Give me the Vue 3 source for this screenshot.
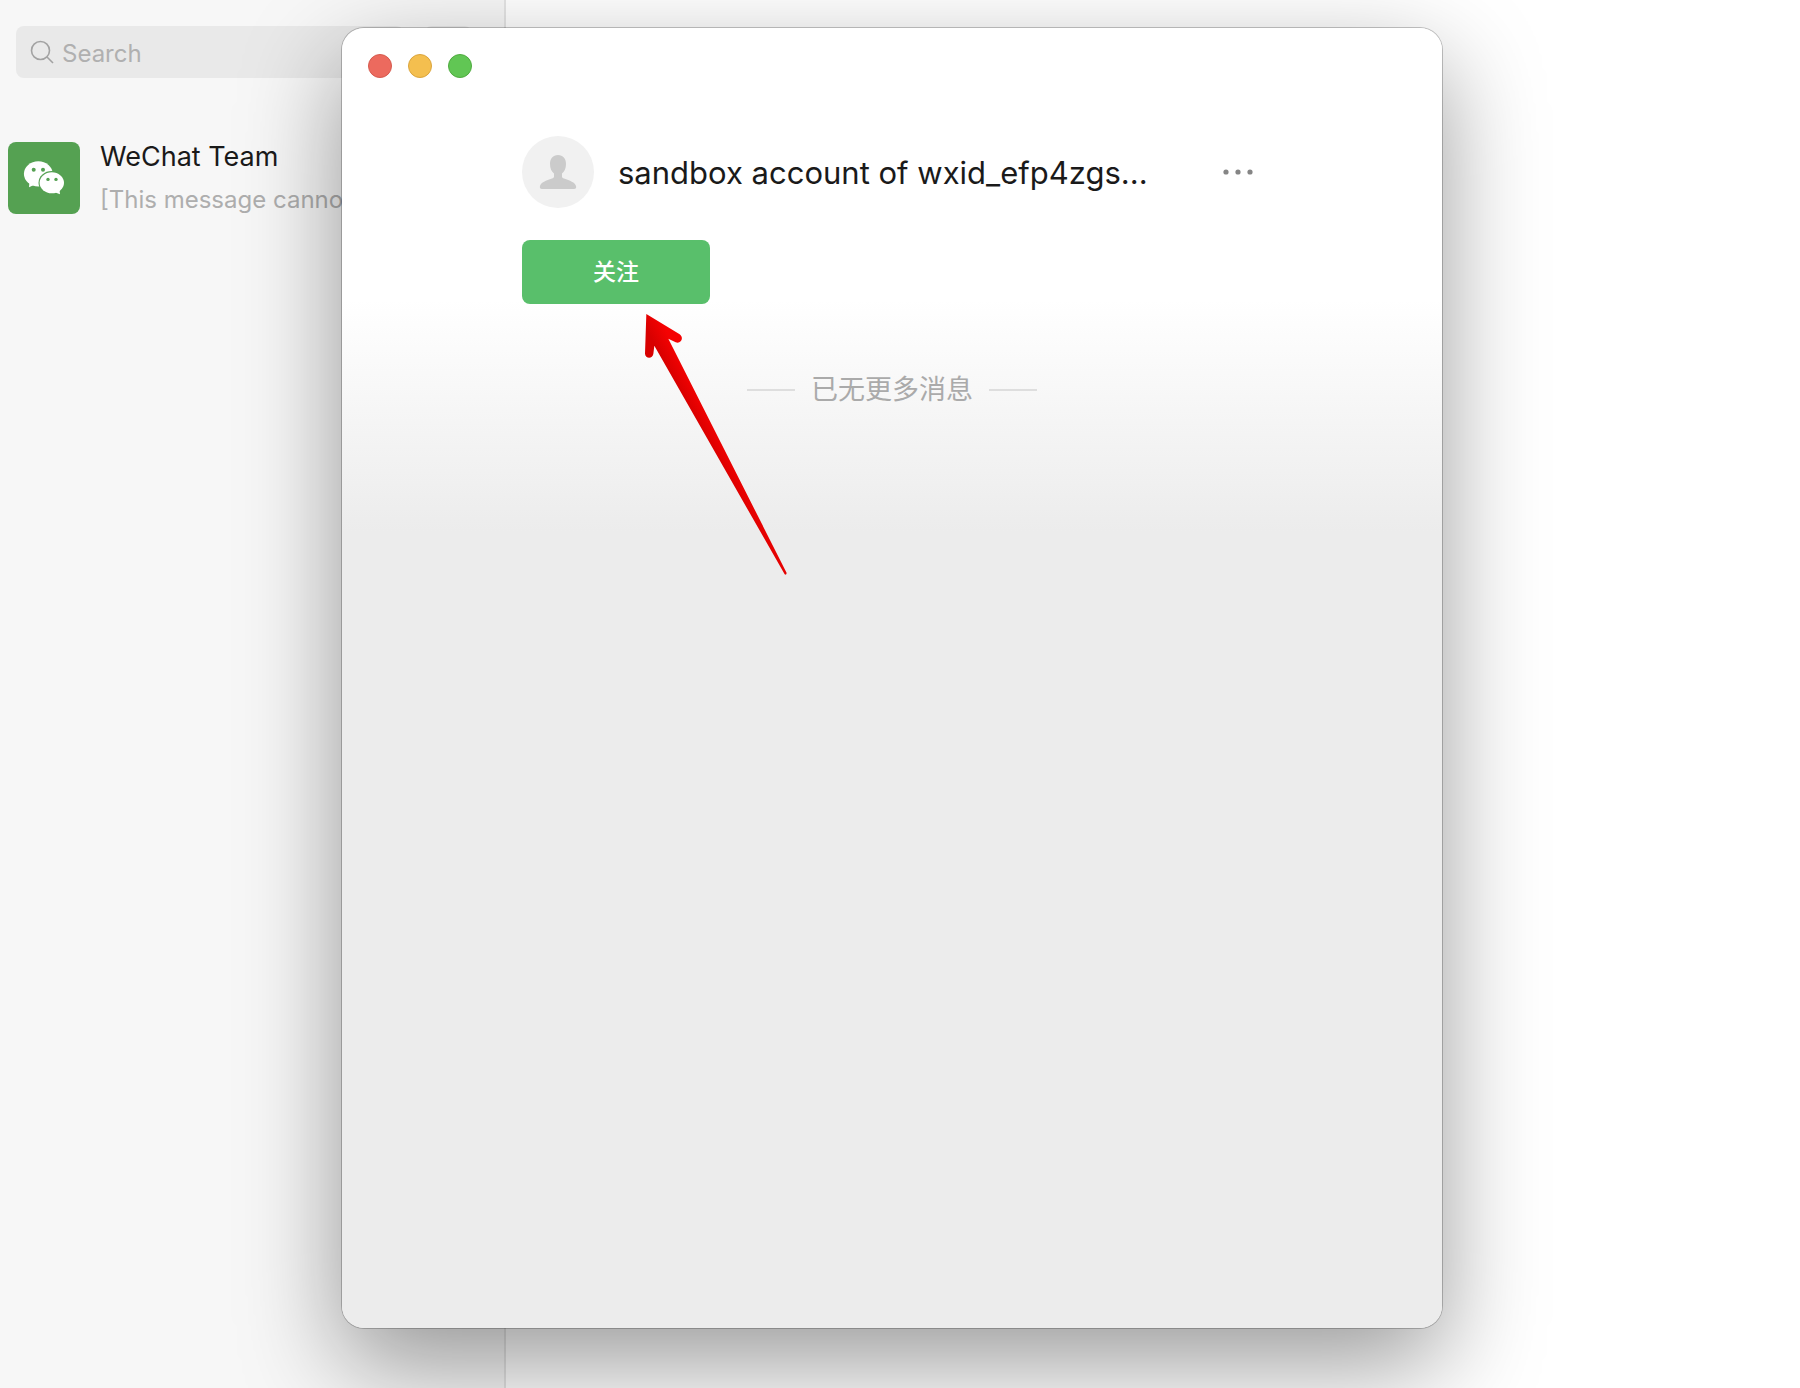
<template>
  <div class="desktop">
    <aside class="sidebar">
      <div class="toolbar">
        <label class="search">
          <svg class="search-icon" viewBox="0 0 24 24" aria-hidden="true">
            <circle cx="10.5" cy="10.5" r="9" />
            <path d="M17 17l6 6" />
          </svg>
          <input v-model="keyword" type="text" placeholder="Search" aria-label="Search" />
        </label>
        <button class="add" type="button" aria-label="Add"></button>
      </div>

      <ul class="chats">
        <li v-for="chat in chats" :key="chat.name" class="chat">
          <svg class="chat-logo" viewBox="0 0 72 72" aria-hidden="true">
            <g fill="#fff">
              <ellipse cx="30.3" cy="31.8" rx="14.4" ry="12.6" />
              <path d="M21.5 39.5L21 45.2l6.5-3z" />
            </g>
            <ellipse cx="43.7" cy="40.7" rx="13.2" ry="11.7" fill="#55a152" />
            <g fill="#fff">
              <ellipse cx="43.8" cy="40.8" rx="12.2" ry="10.5" />
              <path d="M46 50l6 2.2L51.4 46z" />
            </g>
            <g fill="#55a152">
              <circle cx="25.7" cy="27.7" r="2" />
              <circle cx="35" cy="27.7" r="2" />
              <circle cx="40" cy="37.4" r="1.7" />
              <circle cx="48" cy="37.4" r="1.7" />
            </g>
          </svg>
          <div class="chat-text">
            <div class="chat-name">{{ chat.name }}</div>
            <div class="chat-preview">{{ chat.preview }}</div>
          </div>
        </li>
      </ul>
    </aside>

    <main class="conversation"></main>

    <section class="window">
      <header class="titlebar">
        <button class="light red" type="button" aria-label="Close"></button>
        <button class="light yellow" type="button" aria-label="Minimize"></button>
        <button class="light green" type="button" aria-label="Zoom"></button>
      </header>

      <div class="profile">
        <div class="account">
          <svg class="avatar" viewBox="0 0 72 72" aria-hidden="true">
            <circle cx="36" cy="36" r="36" fill="#f1f1f1" />
            <path
              fill="#cbcbcb"
              d="M36 19c5 0 8 3.5 8 9 0 4.5-1.5 7.5-4 9.5v3c0 1 .8 1.7 2 2.1 6 2 11 3.9 12 7.4.5 2-.2 3-2 3H20c-1.8 0-2.500-1-2-3 1-3.5 6-5.4 12-7.4 1.2-.4 2-1.1 2-2.1v-3c-2.500-2-4-5-4-9.5 0-5.500 3-9 8-9z"
            />
          </svg>
          <h1>sandbox account of wxid_efp4zgs...</h1>
          <button class="more" type="button" aria-label="More">
            <svg viewBox="0 0 32 8" aria-hidden="true">
              <circle cx="4" cy="4" r="2.6" />
              <circle cx="16" cy="4" r="2.6" />
              <circle cx="28" cy="4" r="2.6" />
            </svg>
          </button>
        </div>
        <button class="follow" type="button">关注</button>
      </div>

      <div class="feed">
        <p class="no-more">已无更多消息</p>
      </div>
    </section>

    <svg class="pointer" viewBox="0 0 510 870" aria-hidden="true">
      <defs>
        <linearGradient id="arrow" gradientUnits="userSpaceOnUse" x1="245" y1="455" x2="290" y2="431">
          <stop offset="0" stop-color="#d80000" />
          <stop offset="1" stop-color="#f50202" />
        </linearGradient>
      </defs>
      <path
        d="M49 42L149 103c14 10 4 30-12 24l-22-11L470 819q-1 7-6 4L73 137l-3 25c-2 15-24 15-25-1z"
        fill="url(#arrow)"
      />
    </svg>
  </div>
</template>

<script setup>
import { ref } from 'vue'

const keyword = ref('')

const chats = ref([{ name: 'WeChat Team', preview: '[This message cannot' }])
</script>

<style>
body {
  margin: 0;
}
</style>

<style scoped>
.desktop {
  position: relative;
  display: flex;
  min-height: 100vh;
  overflow: hidden;
  background: #fff;
  font-family: 'Inter', 'Noto Sans CJK SC', sans-serif;
  color: #1a1a1a;
}

button {
  padding: 0;
  border: 0;
  font-family: inherit;
}

/* Chat list */
.sidebar {
  flex: 0 0 504px;
  min-width: 0;
  border-right: 2px solid #e4e4e4;
  background: #f7f7f7;
}

.toolbar {
  display: flex;
  gap: 20px;
  padding: 26px 32px 0 16px;
}

.search {
  display: flex;
  flex: 1;
  align-items: center;
  gap: 8px;
  min-width: 0;
  height: 52px;
  padding: 0 14px;
  border-radius: 8px;
  background: #e9e9e9;
}

.search-icon {
  flex: none;
  width: 24px;
  height: 24px;
  fill: none;
  stroke: #a2a2a2;
  stroke-width: 1.6;
}

.search input {
  flex: 1;
  min-width: 0;
  padding: 2px 0 0;
  border: 0;
  outline: 0;
  background: none;
  font-family: inherit;
  font-size: 24px;
  color: #1a1a1a;
}

.search input::placeholder {
  color: #b0b0b0;
  opacity: 1;
}

.add {
  width: 48px;
  height: 52px;
  border-radius: 8px;
  background: #e9e9e9;
}

.chats {
  margin: 0;
  padding: 56px 8px 0;
  list-style: none;
}

.chat {
  display: flex;
  gap: 20px;
  padding: 8px 0;
}

.chat-logo {
  flex: none;
  width: 72px;
  height: 72px;
  border-radius: 8px;
  background: #55a152;
}

.chat-text {
  white-space: nowrap;
}

.chat-name {
  font-size: 27px;
  line-height: 30px;
}

.chat-preview {
  margin-top: 14px;
  font-size: 24px;
  line-height: 28px;
  color: #aeaeae;
}

.conversation {
  flex: 1;
}

/* Official account window */
.window {
  position: absolute;
  inset: 28px 358px 60px 342px;
  border-radius: 22px;
  background: linear-gradient(#fff 272px, #ececec 504px);
  box-shadow:
    0 0 0 1px rgba(0, 0, 0, 0.22),
    0 36px 100px rgba(0, 0, 0, 0.4);
}

.titlebar {
  display: flex;
  gap: 16px;
  padding: 26px;
}

.light {
  width: 24px;
  height: 24px;
  border: 1px solid;
  border-radius: 50%;
}

.red {
  border-color: #d65a4e;
  background: #ec6a5e;
}

.yellow {
  border-color: #dba53d;
  background: #f4bf4f;
}

.green {
  border-color: #4fab3f;
  background: #61c654;
}

.profile {
  padding: 32px 180px 0;
}

.account {
  display: flex;
  align-items: center;
  gap: 24px;
}

.avatar {
  flex: none;
  width: 72px;
  height: 72px;
}

.account h1 {
  flex: 1;
  margin: 0;
  padding-top: 2px;
  font-size: 31px;
  font-weight: 400;
  line-height: 40px;
  white-space: nowrap;
}

.more {
  display: flex;
  padding: 8px;
  background: none;
}

.more svg {
  width: 32px;
  height: 8px;
  fill: #858585;
}

.follow {
  width: 188px;
  height: 64px;
  margin-top: 32px;
  padding-bottom: 4px;
  border-radius: 8px;
  background: #59bf6b;
  font-size: 23px;
  font-weight: 500;
  color: #fff;
}

.feed {
  padding-top: 68px;
}

.no-more {
  display: flex;
  align-items: center;
  justify-content: center;
  gap: 16px;
  margin: 0;
  font-size: 27px;
  line-height: 36px;
  color: #aaa;
}

.no-more::before,
.no-more::after {
  content: '';
  width: 48px;
  height: 2px;
  background: #dedede;
}

/* Red arrow laid over the window, pointing at the follow button */
.pointer {
  position: absolute;
  top: 300px;
  left: 630px;
  width: 170px;
  height: 290px;
  pointer-events: none;
}
</style>
